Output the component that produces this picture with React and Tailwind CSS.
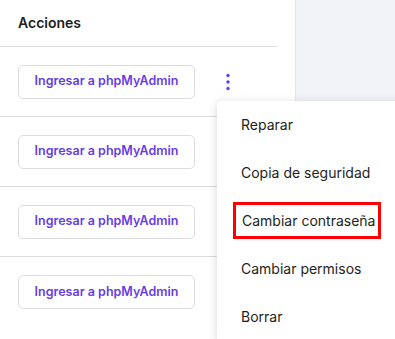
import { useState } from 'react';

const rows = [1, 2, 3, 4];

const menuItems = [
  'Reparar',
  'Copia de seguridad',
  'Cambiar contraseña',
  'Cambiar permisos',
  'Borrar',
];

function Kebab() {
  return (
    <svg width="4" height="18" viewBox="0 0 4 18" className="fill-[#673de6]">
      <circle cx="2" cy="2.5" r="1.7" />
      <circle cx="2" cy="9" r="1.7" />
      <circle cx="2" cy="15.5" r="1.7" />
    </svg>
  );
}

export default function App() {
  const [open] = useState(true);

  return (
    <div
      className="relative flex h-[339px] w-[395px] overflow-hidden bg-white"
      style={{ fontFamily: 'Inter, "Noto Sans", sans-serif' }}
    >
      <div className="w-[295px] shrink-0 bg-white pr-[18px]">
        <div className="flex h-[47px] items-center border-b border-[#dadce0] pl-[18px] pb-[1px]">
          <h2 className="text-[14px] font-semibold text-[#1d1e20]">Acciones</h2>
        </div>

        {rows.map((row, i) => (
          <div
            key={row}
            className={`flex h-[70px] items-center pl-[18px] ${i < rows.length - 1 ? 'border-b border-[#dadce0]' : ''}`}
          >
            <button className="h-[34px] w-[177px] rounded-[5px] border border-[#dadce0] bg-white text-[12.5px] font-semibold text-[#673de6]">
              Ingresar a phpMyAdmin
            </button>
            {i === 0 && (
              <div className="ml-[31px] flex h-[34px] items-center">
                <Kebab />
              </div>
            )}
          </div>
        ))}
      </div>

      <div className="flex-1 border-l border-[#e3e4e8] bg-[#f2f3f8]" />

      {open && (
        <div className="absolute left-[217px] top-[101px] w-[200px] rounded-tl-[4px] bg-white shadow-[0_2px_10px_rgba(29,30,32,0.18)]">
          {menuItems.map((item) => (
            <div key={item} className="flex h-[48px] items-center px-[16px] pb-[1px]">
              {item === 'Cambiar contraseña' ? (
                <span className="flex h-[37px] w-[148px] items-center border-[3px] border-[#ff0000] pl-[6px] text-[14px] text-[#1d1e20]">
                  {item}
                </span>
              ) : (
                <span className="pl-[8px] text-[14px] text-[#1d1e20]">{item}</span>
              )}
            </div>
          ))}
        </div>
      )}
    </div>
  );
}
